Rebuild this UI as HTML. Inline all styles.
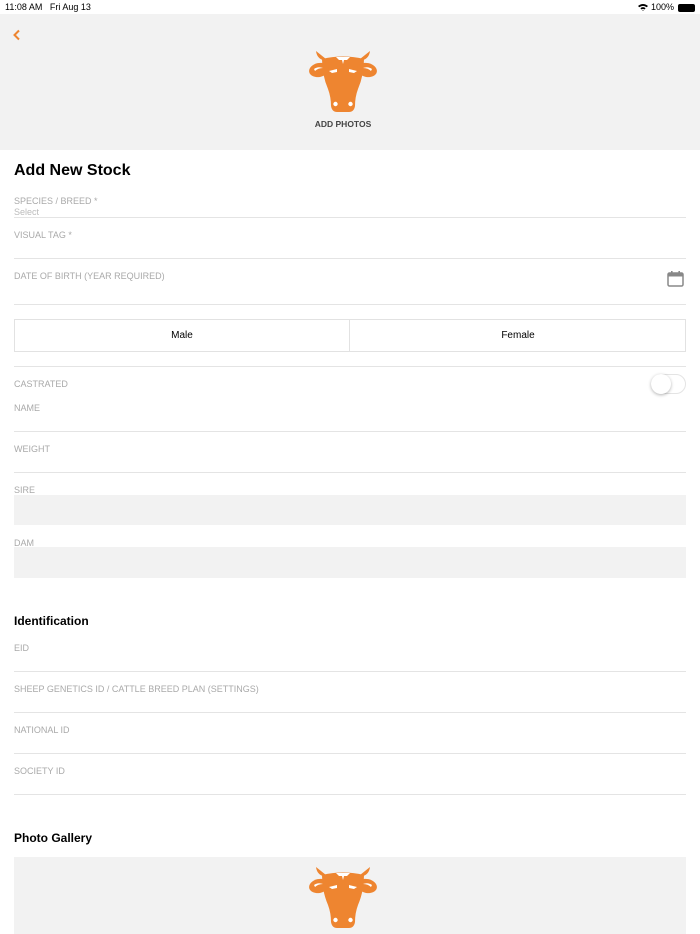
<!DOCTYPE html>
<html><head><meta charset="utf-8"><style>
*{margin:0;padding:0;box-sizing:border-box}
body{width:700px;height:934px;position:relative;overflow:hidden;background:#fff;font-family:"Liberation Sans",sans-serif;color:#000}
.a{position:absolute}
.lbl{position:absolute;left:14px;font-size:9px;color:#a9a9a9;letter-spacing:0}
.ln{position:absolute;left:14px;right:14px;height:1px;background:#e4e4e4}
.gray{position:absolute;left:14px;right:14px;background:#f2f2f2}
h2{position:absolute;left:14px;font-size:12px;font-weight:bold}
</style></head><body>
<div class="a" style="left:5px;top:2px;font-size:9px">11:08 AM&nbsp;&nbsp;&nbsp;Fri Aug 13</div>
<div class="a" style="right:26px;top:2px;font-size:9px">
<svg width="10" height="8" viewBox="0 0 10 8" style="vertical-align:-1px"><path d="M0 3 Q5 -1 10 3 L8.7 4.3 Q5 1.5 1.3 4.3Z M2.4 5.3 Q5 3 7.6 5.3 L6.4 6.5 Q5 5.4 3.6 6.5Z M5 8 L4.3 7.3 Q5 6.8 5.7 7.3Z" fill="#000"/></svg> 100%</div>
<div class="a" style="right:5px;top:4px;width:17px;height:8px;border-radius:2px;background:#000"></div>
<div class="a" style="left:0;top:14px;width:700px;height:136px;background:#f2f2f2"></div>
<svg class="a" style="left:12px;top:29px" width="10" height="12" viewBox="0 0 10 12"><path d="M7 1.5 L2.5 6 L7 10.5" stroke="#ee8530" stroke-width="2" fill="none"/></svg>
<svg class="a" style="left:309px;top:51px" width="68" height="62" viewBox="0 0 68 62">
<g fill="#ee8530">
<path d="M7 0 Q8 9 18 10 L22 12 Z"/><path d="M61 0 Q60 9 50 10 L46 12Z"/>
<path d="M13 8 Q34 3 55 8 Q55 24 49 38 Q46 46 46 55 Q45 61 40 61 L28 61 Q23 61 22 55 Q22 46 19 38 Q13 24 13 8Z"/>
<ellipse cx="10" cy="19" rx="10" ry="7" transform="rotate(-12 10 19)"/>
<ellipse cx="58" cy="19" rx="10" ry="7" transform="rotate(12 58 19)"/>
</g>
<g fill="#fff">
<path d="M27 6 L41 6 L38 9 L35 9 L34 13 L33 9 L30 9Z"/>
<path d="M20 20 L28 18 L28 21 L23 22Z"/><path d="M48 20 L40 18 L40 21 L45 22Z"/>
<path d="M5 18 Q9 15 14 17 Q9 17 6 20Z"/><path d="M63 18 Q59 15 54 17 Q59 17 62 20Z"/>
<circle cx="26.5" cy="53" r="2.2"/><circle cx="41.5" cy="53" r="2.2"/>
</g></svg>
<div class="a" style="left:0;width:686px;text-align:center;top:119px;font-size:8.5px;font-weight:bold;color:#444">ADD PHOTOS</div>
<div class="a" style="left:14px;top:162px;font-size:16px;font-weight:bold">Add New Stock</div>
<div class="lbl" style="top:196px">SPECIES / BREED *</div>
<div class="lbl" style="top:207px;color:#bbb">Select</div>
<div class="ln" style="top:217px"></div>
<div class="lbl" style="top:230px">VISUAL TAG *</div>
<div class="ln" style="top:258px"></div>
<div class="lbl" style="top:271px">DATE OF BIRTH (YEAR REQUIRED)</div>
<svg class="a" style="left:667px;top:270px" width="17" height="17" viewBox="0 0 17 17"><rect x="1" y="3" width="15" height="13" rx="1.5" fill="none" stroke="#888" stroke-width="1.5"/><rect x="1" y="3" width="15" height="3.5" fill="#888"/><rect x="4" y="1" width="1.6" height="3" fill="#888"/><rect x="11.4" y="1" width="1.6" height="3" fill="#888"/></svg>
<div class="ln" style="top:304px"></div>
<div class="a" style="left:14px;top:319px;width:672px;height:33px;border:1px solid #e2e2e2"></div>
<div class="a" style="left:349px;top:319px;width:1px;height:33px;background:#e2e2e2"></div>
<div class="a" style="left:14px;width:336px;top:330px;text-align:center;font-size:10px">Male</div>
<div class="a" style="left:350px;width:336px;top:330px;text-align:center;font-size:10px">Female</div>
<div class="ln" style="top:366px"></div>
<div class="lbl" style="top:379px">CASTRATED</div>
<div class="a" style="left:651px;top:374px;width:35px;height:20px;border-radius:10px;border:1px solid #e4e4e4;background:#fff"></div>
<div class="a" style="left:651px;top:374px;width:20px;height:20px;border-radius:10px;background:#fff;box-shadow:0 1px 3px rgba(0,0,0,.3)"></div>
<div class="lbl" style="top:403px">NAME</div>
<div class="ln" style="top:431px"></div>
<div class="lbl" style="top:444px">WEIGHT</div>
<div class="ln" style="top:472px"></div>
<div class="lbl" style="top:485px">SIRE</div>
<div class="gray" style="top:495px;height:30px"></div>
<div class="lbl" style="top:538px">DAM</div>
<div class="gray" style="top:547px;height:31px"></div>
<h2 style="top:614px">Identification</h2>
<div class="lbl" style="top:643px">EID</div>
<div class="ln" style="top:671px"></div>
<div class="lbl" style="top:684px">SHEEP GENETICS ID / CATTLE BREED PLAN (SETTINGS)</div>
<div class="ln" style="top:712px"></div>
<div class="lbl" style="top:725px">NATIONAL ID</div>
<div class="ln" style="top:753px"></div>
<div class="lbl" style="top:766px">SOCIETY ID</div>
<div class="ln" style="top:794px"></div>
<h2 style="top:831px">Photo Gallery</h2>
<div class="gray" style="top:857px;height:77px"></div>
<svg class="a" style="left:309px;top:867px" width="68" height="62" viewBox="0 0 68 62">
<g fill="#ee8530">
<path d="M7 0 Q8 9 18 10 L22 12 Z"/><path d="M61 0 Q60 9 50 10 L46 12Z"/>
<path d="M13 8 Q34 3 55 8 Q55 24 49 38 Q46 46 46 55 Q45 61 40 61 L28 61 Q23 61 22 55 Q22 46 19 38 Q13 24 13 8Z"/>
<ellipse cx="10" cy="19" rx="10" ry="7" transform="rotate(-12 10 19)"/>
<ellipse cx="58" cy="19" rx="10" ry="7" transform="rotate(12 58 19)"/>
</g>
<g fill="#fff">
<path d="M27 6 L41 6 L38 9 L35 9 L34 13 L33 9 L30 9Z"/>
<path d="M20 20 L28 18 L28 21 L23 22Z"/><path d="M48 20 L40 18 L40 21 L45 22Z"/>
<path d="M5 18 Q9 15 14 17 Q9 17 6 20Z"/><path d="M63 18 Q59 15 54 17 Q59 17 62 20Z"/>
<circle cx="26.5" cy="53" r="2.2"/><circle cx="41.5" cy="53" r="2.2"/>
</g></svg>
</body></html>
